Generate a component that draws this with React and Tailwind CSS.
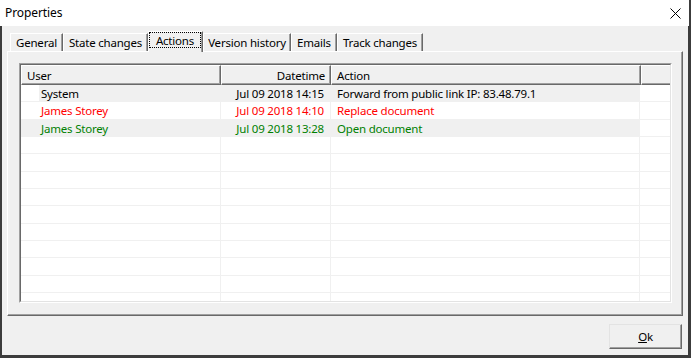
import React from "react";

const font = { fontFamily: '"Noto Sans", "Open Sans", sans-serif' };

const tabs = [
  { label: "General", w: "w-[53px]" },
  { label: "State changes", w: "w-[85px]" },
  { label: "Actions", w: "w-[55px]", active: true },
  { label: "Version history", w: "w-[88px]" },
  { label: "Emails", w: "w-[46px]" },
  { label: "Track changes", w: "w-[86px]" },
];

const rows = [
  { user: "System", dt: "Jul 09 2018 14:15", action: "Forward from public link IP: 83.48.79.1", color: "text-black", bg: "gray", focus: true },
  { user: "James Storey", dt: "Jul 09 2018 14:10", action: "Replace document", color: "text-[#ff0000]", bg: "white" },
  { user: "James Storey", dt: "Jul 09 2018 13:28", action: "Open document", color: "text-[#008000]", bg: "gray" },
];

function Row({ r }) {
  const gray = r.bg === "gray";
  const bg = gray ? "bg-[#f0f0f0]" : "bg-white";
  return (
    <div className={`flex h-[17.33px] shrink-0 ${r.color}`}>
      <div className="w-[200px] flex border-r border-b border-[#f0f0f0]">
        <div className={`w-[18px] h-full ${gray && !r.focus ? "bg-[#f0f0f0]" : "bg-white"}`} />
        <div className={`flex-1 h-full pl-[2px] pt-[1px] flex items-center ${bg}`}>{r.user}</div>
      </div>
      <div className={`w-[110px] flex items-center pt-[1px] justify-end pr-[6px] border-r border-b border-[#f0f0f0] ${bg}`}>{r.dt}</div>
      <div className={`w-[309px] flex items-center pt-[1px] pl-[6px] border-r border-b border-[#f0f0f0] whitespace-nowrap ${bg}`}>{r.action}</div>
      <div className="flex-1 border-b border-[#f0f0f0] bg-white" />
    </div>
  );
}

function EmptyRow() {
  return (
    <div className="flex h-[17.33px] shrink-0">
      <div className="w-[200px] border-r border-b border-[#f0f0f0]" />
      <div className="w-[110px] border-r border-b border-[#f0f0f0]" />
      <div className="w-[309px] border-r border-b border-[#f0f0f0]" />
      <div className="flex-1 border-b border-[#f0f0f0]" />
    </div>
  );
}

function HeaderCell({ children, w, align = "left", last }) {
  return (
    <div
      className={`${w} h-[20px] pt-[1px] flex items-center bg-[#f0f0f0] border-t border-l border-white ${
        last ? "border-b border-b-[#696969] shadow-[inset_0_-1px_0_#a0a0a0]" : "border-r border-b border-r-[#696969] border-b-[#696969] shadow-[inset_-1px_-1px_0_#a0a0a0]"
      } ${align === "right" ? "justify-end pr-[5px]" : "pl-[5px]"}`}
    >
      {children}
    </div>
  );
}

export default function App() {
  return (
    <div
      className="w-[691px] h-[358px] bg-[#3c3c3c] flex flex-col text-[11.5px] tracking-[-0.2px] text-black overflow-hidden"
      style={font}
    >
      {/* title bar */}
      <div className="h-[26px] mr-[2px] bg-white flex items-center justify-between shrink-0">
        <span className="pl-[5px] text-[12px] tracking-[-0.1px]">Properties</span>
        <svg width="11" height="11" viewBox="0 0 11 11" className="mr-[8px]">
          <path d="M0.5 0.5 L10.5 10.5 M10.5 0.5 L0.5 10.5" stroke="#000" strokeWidth="1" />
        </svg>
      </div>

      {/* body */}
      <div className="flex-1 ml-[2px] mr-[3px] mb-[3px] bg-[#f0f0f0] flex flex-col">
        {/* tabs */}
        <div className="h-[20px] mt-[5px] pl-[8px] flex items-start shrink-0">
          {tabs.map((t) =>
            t.active ? (
              <div
                key={t.label}
                className={`${t.w} h-[21px] relative z-10 bg-[#f0f0f0] border-t border-l border-white border-r border-r-[#696969] shadow-[inset_-1px_0_0_#a0a0a0] flex flex-col`}
              >
                <div className="h-[16px] mr-[1px] pt-[1px] border border-dotted border-black flex items-center justify-center leading-none whitespace-nowrap">
                  {t.label}
                </div>
              </div>
            ) : (
              <div
                key={t.label}
                className={`${t.w} h-[18px] mt-[2px] pt-[1px] bg-[#f0f0f0] border-t border-l border-white border-r border-r-[#696969] shadow-[inset_-1px_0_0_#a0a0a0] flex items-center justify-center whitespace-nowrap`}
              >
                {t.label}
              </div>
            )
          )}
        </div>

        {/* panel */}
        <div className="ml-[5px] w-[676px] h-[265px] shrink-0 border-t border-l border-white border-r border-b border-r-[#696969] border-b-[#696969] shadow-[inset_-1px_-1px_0_#a0a0a0] pt-[11px] pl-[11px]">
          <div className="w-[653px] h-[240px] border-t border-l border-[#a0a0a0] border-r border-b border-r-white border-b-white">
            <div className="w-full h-full border-t border-l border-[#696969] border-r border-b border-r-[#e3e3e3] border-b-[#e3e3e3] bg-white flex flex-col overflow-hidden">
              <div className="flex shrink-0">
                <HeaderCell w="w-[200px]">User</HeaderCell>
                <HeaderCell w="w-[110px]" align="right">Datetime</HeaderCell>
                <HeaderCell w="w-[310px]">Action</HeaderCell>
                <HeaderCell w="flex-1" last>{""}</HeaderCell>
              </div>
              {rows.map((r, i) => (
                <Row key={i} r={r} />
              ))}
              {Array.from({ length: 12 }).map((_, i) => (
                <EmptyRow key={i} />
              ))}
            </div>
          </div>
        </div>

        {/* button */}
        <div className="flex justify-end mt-[8px] mr-[6px]">
          <button className="w-[73px] h-[25px] bg-[#f0f0f0] border-t border-l border-[#e3e3e3] border-r border-b border-r-[#696969] border-b-[#696969] shadow-[inset_-1px_-1px_0_#a0a0a0] flex items-center justify-center">
            <span>
              <span className="underline">O</span>k
            </span>
          </button>
        </div>
      </div>
    </div>
  );
}
